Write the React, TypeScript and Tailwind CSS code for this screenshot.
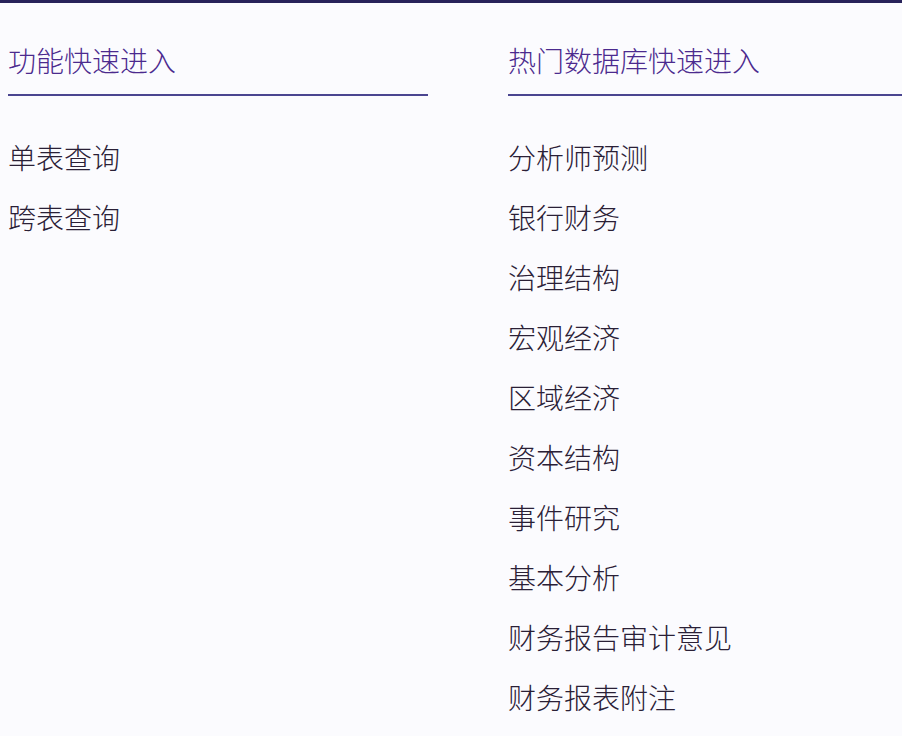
const features = ["单表查询", "跨表查询"];

const databases = [
  "分析师预测",
  "银行财务",
  "治理结构",
  "宏观经济",
  "区域经济",
  "资本结构",
  "事件研究",
  "基本分析",
  "财务报告审计意见",
  "财务报表附注",
];

function Column({ title, items, className }: { title: string; items: string[]; className?: string }) {
  return (
    <div className={className}>
      <h2 className="h-9 leading-9 text-[28px] font-light text-[#4b2a8e]">{title}</h2>
      <div className="mt-4 h-[2px] bg-[#4a4590]" />
      <ul className="mt-[31px]">
        {items.map((item) => (
          <li key={item} className="h-[60px] leading-[60px] text-[28px] font-light text-[#2a2036]">
            {item}
          </li>
        ))}
      </ul>
    </div>
  );
}

export default function App() {
  return (
    <div
      className="w-[902px] h-[736px] overflow-hidden bg-[#fbfbfe]"
      style={{ fontFamily: '"Noto Sans CJK SC", "Noto Sans", sans-serif' }}
    >
      {/* top accent bar */}
      <div className="h-[3px] bg-[#28235a]" />

      <div className="flex pt-[39px] pl-2">
        <Column title="功能快速进入" items={features} className="w-[420px] shrink-0" />
        <Column title="热门数据库快速进入" items={databases} className="flex-1 ml-20" />
      </div>
    </div>
  );
}
